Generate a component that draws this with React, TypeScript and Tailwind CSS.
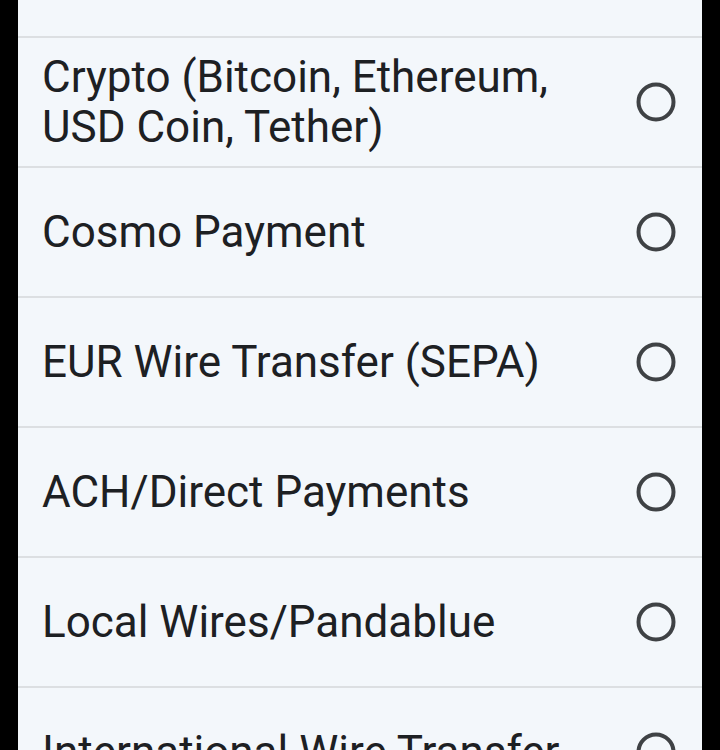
import React from "react";

const items = [
  "Crypto (Bitcoin, Ethereum, USD Coin, Tether)",
  "Cosmo Payment",
  "EUR Wire Transfer (SEPA)",
  "ACH/Direct Payments",
  "Local Wires/Pandablue",
  "International Wire Transfer",
];

function Radio() {
  return (
    <svg width="40" height="40" viewBox="0 0 40 40" className="shrink-0">
      <circle cx="20" cy="20" r="17.5" fill="none" stroke="#3f4245" strokeWidth="4" />
    </svg>
  );
}

export default function App() {
  return (
    <div className="h-[750px] w-[720px] overflow-hidden bg-black">
      <div className="mx-[18px] bg-[#f3f7fb]" style={{ fontFamily: "Roboto, 'Noto Sans', sans-serif" }}>
        <div className="h-[38px] border-b-2 border-[#dcdfe2]" />
        {items.map((t) => (
          <div key={t} className="flex h-[130px] items-center border-b-2 border-[#dcdfe2] pl-[24px] pr-[26px]">
            <div className="flex-1 pr-[40px] text-[44px] leading-[50px] text-[#1d2023]">{t}</div>
            <Radio />
          </div>
        ))}
      </div>
    </div>
  );
}
